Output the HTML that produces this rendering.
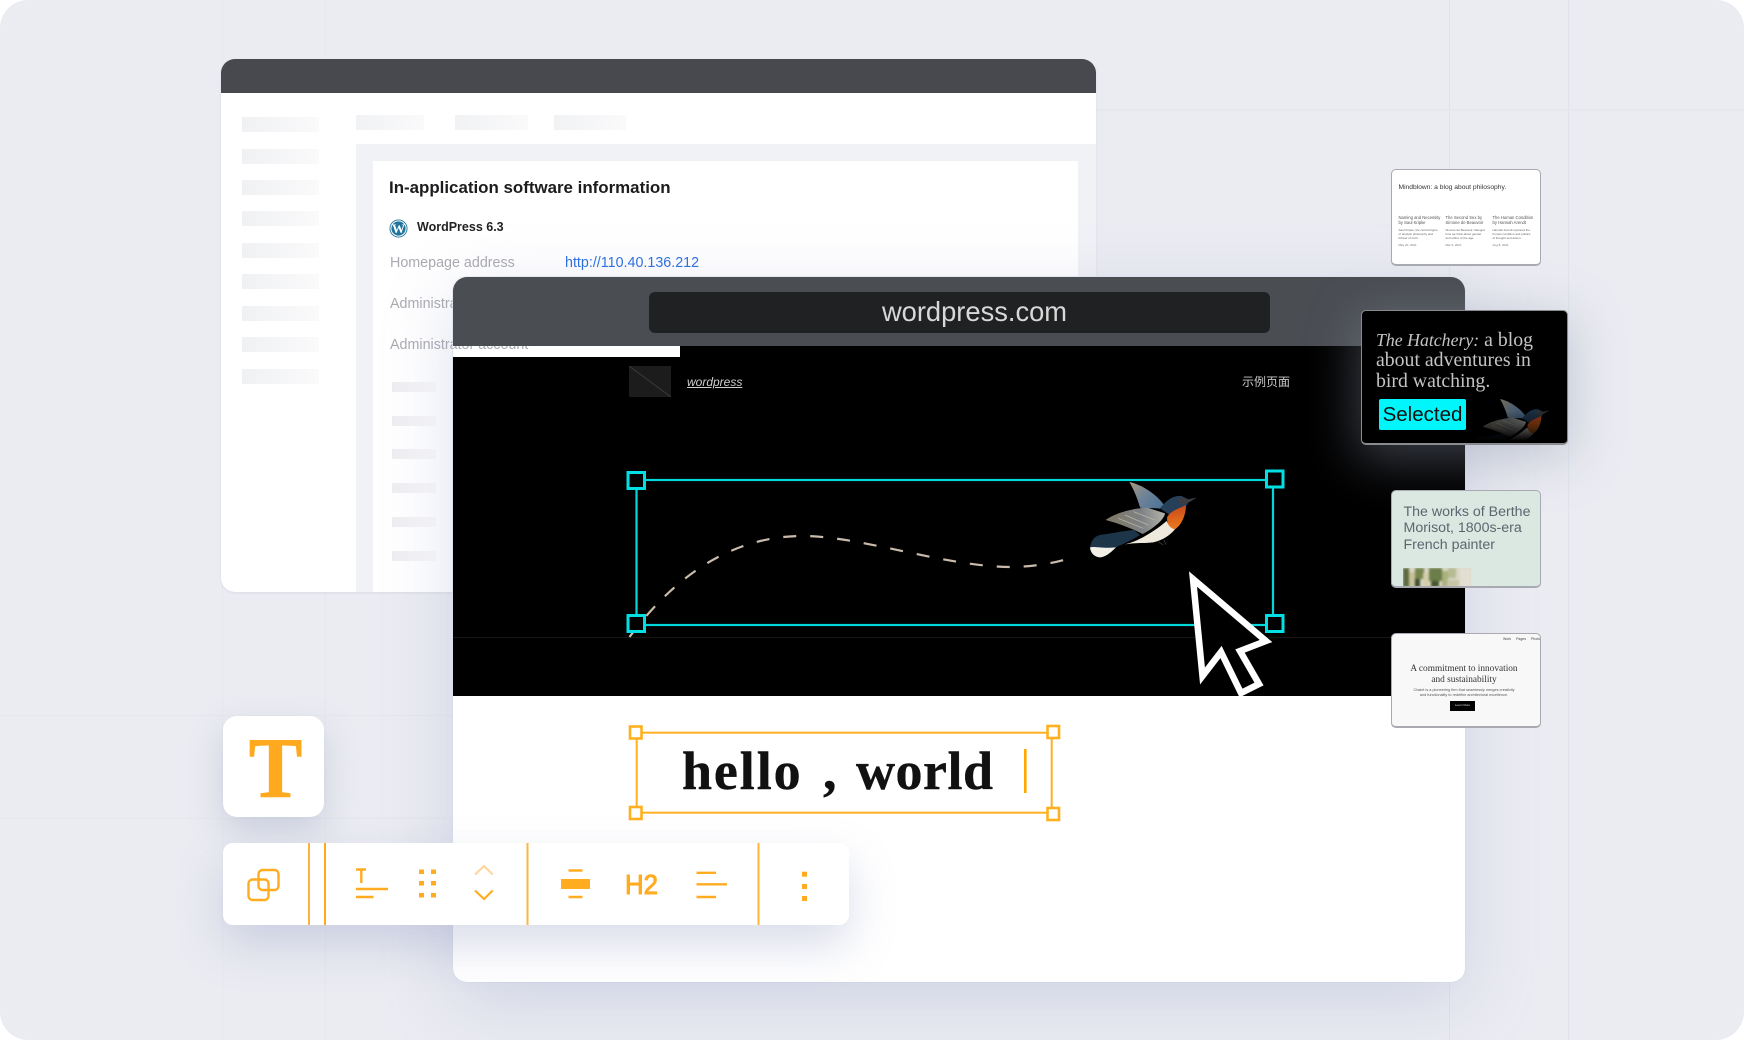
<!DOCTYPE html>
<html lang="en"><head><meta charset="utf-8"><title>WordPress</title>
<style>
html,body{margin:0;padding:0;background:#fff}
#p{position:relative;width:1744px;height:1040px;overflow:hidden;background:#ebecf2;border-radius:28px;font-family:"Liberation Sans","Noto Sans CJK SC",sans-serif}
#p div,#p span,#p svg{position:absolute}
.t{white-space:nowrap;line-height:1}
.gv{width:1px;top:0;height:1040px;background:#e6e8ee}
.gb{background:#dfe4ec}
.gh{height:1px;background:#e6e8ee}
.sb{left:21px;width:77px;height:15px;background:linear-gradient(90deg,#f0f1f3,#fafafb)}
.tb{top:56px;height:15px;background:linear-gradient(90deg,#f1f2f4,#fafafb)}
.sm{left:171px;width:44px;height:10px;background:linear-gradient(90deg,#eeeef1,#fafafb)}
.card{box-sizing:border-box;border:1.5px solid #a9aab1;border-bottom-width:2px;border-radius:5px;overflow:hidden}
</style></head><body>
<div id="p">
<div class="gv" style="left:222px"></div><div class="gv" style="left:325px"></div><div class="gv gb" style="left:1449px"></div><div class="gv gb" style="left:1568px"></div>
<div class="gh" style="left:1096px;right:0;top:109px;height:2px"></div>
<div class="gh" style="left:0;width:453px;top:715px"></div><div class="gh" style="left:0;width:453px;top:818px"></div>

<!-- back window -->
<div style="left:221px;top:59px;width:875px;height:533px;background:#fff;border-radius:14px;overflow:hidden;box-shadow:0 1px 2px rgba(150,155,175,.2)">
  <div style="left:0;top:0;width:875px;height:34px;background:#47494e"></div>
  <div class="sb" style="top:58px"></div><div class="sb" style="top:90px"></div><div class="sb" style="top:121px"></div><div class="sb" style="top:152px"></div><div class="sb" style="top:184px"></div><div class="sb" style="top:215px"></div><div class="sb" style="top:247px"></div><div class="sb" style="top:278px"></div><div class="sb" style="top:310px"></div>
  <div class="tb" style="left:135px;width:68px"></div><div class="tb" style="left:234px;width:73px"></div><div class="tb" style="left:333px;width:72px"></div>
  <div style="left:135px;top:85px;width:740px;height:448px;background:#f1f2f6"></div>
  <div style="left:152px;top:102px;width:705px;height:431px;background:#fff"></div>
  <div class="t" style="left:168px;top:121px;font-size:16.900px;font-weight:700;color:#1c1c1e">In-application software information</div>
  <svg style="left:168px;top:160px" width="19" height="19" viewBox="0 0 19 19"><circle cx="9.500" cy="9.500" r="9" fill="#21759b"/><circle cx="9.500" cy="9.500" r="7.600" fill="none" stroke="#fff" stroke-width="1"/><text x="9.500" y="14" text-anchor="middle" font-family="Liberation Serif" font-weight="700" font-size="13" fill="#fff">W</text></svg>
  <div class="t" style="left:196px;top:162px;font-size:12.500px;font-weight:700;color:#222">WordPress 6.3</div>
  <div class="t" style="left:169px;top:197px;font-size:14.300px;color:#aaaab0">Homepage address</div>
  <div class="t" style="left:344px;top:197px;font-size:14.300px;color:#2b6fe3">http://110.40.136.212</div>
  <div class="t" style="left:169px;top:238px;font-size:14.300px;color:#aaaab0">Administrator</div>
  <div class="t" style="left:169px;top:279px;font-size:14.300px;color:#aaaab0">Administrator account</div>
  <div class="sm" style="top:323px"></div><div class="sm" style="top:357px"></div><div class="sm" style="top:390px"></div><div class="sm" style="top:424px"></div><div class="sm" style="top:458px"></div><div class="sm" style="top:492px"></div>
</div>

<!-- front window -->
<div style="left:453px;top:277px;width:1012px;height:705px;background:#fff;border-radius:14px;box-shadow:0 20px 70px rgba(150,158,200,.32),0 0 0 1px rgba(225,228,236,.6)"></div>
<div style="left:453px;top:277px;width:1012px;height:705px;border-radius:14px;overflow:hidden">
  <div style="left:0;top:0;width:1012px;height:69px;background:#4a4d52"></div>
  <div style="left:196px;top:15px;width:621px;height:41px;background:#202122;border-radius:6px"></div>
  <div class="t" style="left:211px;top:20px;width:621px;text-align:center;font-size:27.300px;color:#d8d8d8;line-height:30px">wordpress.com</div>
  <div style="left:0;top:69px;width:1012px;height:350px;background:#000"></div>
  <div style="left:0;top:69px;width:227px;height:11px;background:#fff;overflow:hidden"><div class="t" style="left:-63px;top:-8px;font-size:14.300px;color:#aaaab0">Administrator account</div></div>
  <div style="left:0;top:360px;width:1012px;height:1px;background:#171717"></div>
  <svg style="left:176px;top:89px" width="42" height="31"><rect width="42" height="31" fill="#1c1c1c"/><path d="M0 0L42 31" stroke="#3a3a3a" stroke-width="1"/></svg>
  <div class="t" style="left:234px;top:99px;font-size:12px;font-style:italic;color:#cfcfcf;text-decoration:underline">wordpress</div>
  <div class="t" style="left:789px;top:99px;font-size:12px;color:#c8c8c8">示例页面</div>
</div>

<!-- overlay drawing -->
<svg style="left:0;top:0" width="1744" height="1040" viewBox="0 0 1744 1040" fill="none">
  <defs>
    <filter id="soft" x="-10%" y="-10%" width="120%" height="120%"><feGaussianBlur stdDeviation="1.100"/></filter>
    <linearGradient id="w1" x1="208" y1="66" x2="300" y2="145" gradientUnits="userSpaceOnUse"><stop offset="0" stop-color="#a8977a"/><stop offset=".5" stop-color="#6f8398"/><stop offset="1" stop-color="#4e7497"/></linearGradient>
    <linearGradient id="w2" x1="137" y1="180" x2="315" y2="165" gradientUnits="userSpaceOnUse"><stop offset="0" stop-color="#7f7763"/><stop offset=".6" stop-color="#7d8184"/><stop offset="1" stop-color="#b4b3aa"/></linearGradient>
    <linearGradient id="o" x1="340" y1="140" x2="350" y2="208" gradientUnits="userSpaceOnUse"><stop offset="0" stop-color="#c9491a"/><stop offset="1" stop-color="#ee7c1f"/></linearGradient>
    <g id="bird" filter="url(#soft)">
      <path d="M208 66C240 72 290 100 316 140L300 146C270 142 250 148 240 142C232 115 222 90 208 66Z" fill="url(#w1)"/>
      <path d="M300 145C320 120 340 105 365 108L385 118L410 113L385 128L378 138L330 165Z" fill="#25405a"/>
      <path d="M350 113L385 118L410 113L385 128L365 135Z" fill="#3d3d40"/>
      <path d="M195 253C225 246 270 225 320 183C325 195 335 205 345 208C330 225 310 240 280 247C250 250 225 248 195 253Z" fill="#efe9dd"/>
      <path d="M322 170C335 150 360 145 378 135C378 165 365 195 345 208C330 205 318 190 322 170Z" fill="url(#o)"/>
      <path d="M90 268C92 245 100 228 125 224C160 220 190 212 222 210L240 225C215 240 190 252 168 262L150 268L120 262Z" fill="#1f3548"/>
      <path d="M90 262C105 258 125 266 168 262C150 280 135 292 118 292C105 290 92 282 90 262Z" fill="#f2efe6"/>
      <path d="M137 180C165 160 215 145 262 143L315 160C312 180 280 205 248 222C215 205 175 190 137 180Z" fill="url(#w2)"/>
      <path d="M175 175L250 205M195 165L265 195M220 155L285 180" stroke="#b7b3a3" stroke-width="2.500"/>
      <path d="M295 245L310 255M312 240L318 254" stroke="#333" stroke-width="3"/>
    </g>
  </defs>

  <!-- cyan frame -->
  <path d="M629.500 637C668 585 725 535 805 536C865 537 950 568 1015 567C1040 566 1060 562 1076 556" stroke="#c9bbab" stroke-width="2.200" stroke-dasharray="13 14"/>
  <rect x="636.500" y="480" width="636.500" height="145" stroke="#00d8dc" stroke-width="2.200"/>
  <g fill="#000" stroke="#00e0e4" stroke-width="3">
    <rect x="628" y="472.500" width="16.500" height="16"/><rect x="1266.500" y="471" width="16.500" height="16"/>
    <rect x="628" y="615.500" width="16.500" height="16"/><rect x="1266.500" y="615.500" width="16.500" height="16"/>
  </g>
  <use href="#bird" transform="translate(1060 460) scale(.3333)"/>
  <polygon points="1193,579 1266,641 1240,651 1259,684 1241,693 1221,652 1202.500,676" fill="#000" stroke="#fff" stroke-width="6.500" stroke-linejoin="miter"/>
  <rect x="453" y="696" width="1012" height="10" fill="#fff"/>

  <!-- orange frame -->
  <rect x="636.700" y="732.700" width="415" height="80" stroke="#ffb020" stroke-width="2"/>
  <g fill="#fff" stroke="#ffb020" stroke-width="2.600">
    <rect x="630" y="726.500" width="11.500" height="12"/><rect x="1047.500" y="726" width="11.500" height="12"/>
    <rect x="630" y="807" width="11.500" height="12"/><rect x="1047.500" y="808" width="11.500" height="12"/>
  </g>
  <rect x="1024" y="749" width="2.600" height="44" fill="#ffa800"/>
  <g font-family="Liberation Serif" font-weight="700" font-size="54" fill="#111" stroke="#111" stroke-width=".4">
    <text x="682" y="789" letter-spacing="1.900">hello</text>
    <text x="823" y="789">,</text>
    <text x="856" y="789" letter-spacing=".5">world</text>
  </g>
</svg>

<!-- T tile -->
<div style="left:223px;top:716px;width:101px;height:101px;background:#fff;border-radius:14px;box-shadow:0 14px 34px rgba(130,140,175,.3)"></div>
<div class="t" style="left:225px;top:723px;width:101px;text-align:center;font:700 86px/90px 'Liberation Serif',serif;color:#ffa91f;-webkit-text-stroke:1px #ffa91f;transform:scaleX(.93)">T</div>

<!-- toolbar -->
<div style="left:223px;top:843px;width:626px;height:82px;background:#fff;border-radius:10px;box-shadow:0 20px 45px rgba(130,140,185,.3)"></div>
<svg style="left:0;top:0" width="1744" height="1040" viewBox="0 0 1744 1040" fill="none" stroke="#ffac20">
  <g stroke-width="2" stroke="#ffb53c">
    <path d="M309 843V925"/><path d="M325 843V925" stroke="#ffa91f"/><path d="M527.500 843V925"/><path d="M758.500 843V925"/>
  </g>
  <g stroke-width="2.400">
    <rect x="258.500" y="870" width="20" height="20" rx="4"/><rect x="248.500" y="879.500" width="20" height="20.500" rx="4"/>
    <path d="M356 869.500H366M361.300 869.500V883M356 889H388M356 897H373.500"/>
    <path d="M568.500 870.500H582.500M568.500 897H582.500M696.500 872.800H716M696.500 884.300H727M696.500 897H716"/>
  </g>
  <path d="M475 874.500L484 866L492.700 874.500" stroke-width="2" stroke="#ffd49a"/>
  <path d="M475 890.500L484 899L492.700 890.500" stroke-width="2.200"/>
  <g fill="#ffac20" stroke="none">
    <rect x="419" y="869.500" width="5" height="4.500"/><rect x="431" y="869.500" width="5" height="4.500"/>
    <rect x="419" y="881" width="5" height="4.500"/><rect x="431" y="881" width="5" height="4.500"/>
    <rect x="419" y="893" width="5" height="4.500"/><rect x="431" y="893" width="5" height="4.500"/>
    <rect x="561" y="879" width="29" height="10"/>
    <rect x="802" y="871.700" width="5" height="5"/><rect x="802" y="884" width="5" height="5"/><rect x="802" y="896" width="5" height="5"/>
    <text x="625" y="894" font-family="Liberation Sans" font-size="27.500" textLength="33" lengthAdjust="spacingAndGlyphs" stroke="#ffac20" stroke-width="1">H2</text>
  </g>
</svg>

<!-- cards -->
<div class="card" style="left:1391px;top:169px;width:150px;height:97px;background:#fff">
  <div class="t" style="left:6.500px;top:14.500px;font-size:6.700px;color:#333">Mindblown: a blog about philosophy.</div>
  <div class="t" style="left:6.500px;top:45px;font-size:4.200px;line-height:5.300px;color:#555">Naming and Necessity<br>by Saul Kripke</div>
  <div class="t" style="left:53.500px;top:45px;font-size:4.200px;line-height:5.300px;color:#555">The Second Sex by<br>Simone de Beauvoir</div>
  <div class="t" style="left:100.500px;top:45px;font-size:4.200px;line-height:5.300px;color:#555">The Human Condition<br>by Hannah Arendt</div>
  <div class="t" style="left:6.500px;top:58px;font-size:3px;line-height:4px;color:#666">Saul Kripke, the central figure<br>of analytic philosophy and<br>thinker of truth.</div>
  <div class="t" style="left:53.500px;top:58px;font-size:3px;line-height:4px;color:#666">Simone de Beauvoir changed<br>how we think about gender<br>and ethics of the age.</div>
  <div class="t" style="left:100.500px;top:58px;font-size:3px;line-height:4px;color:#666">Hannah Arendt explored the<br>human condition and politics<br>of thought and action.</div>
  <div class="t" style="left:6.500px;top:74px;font-size:3px;color:#777">May 20, 2021</div><div class="t" style="left:53.500px;top:74px;font-size:3px;color:#777">Mar 6, 2021</div><div class="t" style="left:100.500px;top:74px;font-size:3px;color:#777">Aug 8, 2021</div>
</div>

<div class="card" style="left:1361px;top:310px;width:207px;height:135px;background:#000;border-color:#8a8b90;box-shadow:0 10px 50px 4px rgba(140,150,172,.42)">
  <div class="t" style="left:14px;top:18.500px;font:19.800px/20.500px 'Liberation Serif',serif;color:#c4c4c4"><i style="font-size:17.800px">The Hatchery:</i> a blog<br>about adventures in<br>bird watching.</div>
  <svg style="left:-2px;top:-2px;opacity:.72" width="207" height="135" viewBox="1361 310 207 135" fill="none"><use href="#bird" transform="translate(1450.400 384) scale(.2433)"/></svg>
  <div style="left:60px;top:100px;width:147px;height:35px;background:linear-gradient(180deg,rgba(0,0,0,0) 0,rgba(0,0,0,.35) 35%,#000 85%)"></div>
  <div class="t" style="left:17px;top:88px;width:87px;height:31px;background:#00f6fb;border-radius:2px;color:#111;font-size:20.500px;line-height:31px;text-align:center">Selected</div>
</div>

<div class="card" style="left:1391px;top:490px;width:150px;height:98px;background:#dbe8e2">
  <div class="t" style="left:11.500px;top:12.500px;font-size:14.200px;line-height:16.800px;color:#5a666f">The works of Berthe<br>Morisot, 1800s-era<br>French painter</div>
  <svg style="left:10.500px;top:77px" width="68" height="19"><rect width="68" height="19" fill="#d9d8c6"/><g style="filter:blur(1px)"><rect x="0" y="0" width="6" height="19" fill="#5e6a42"/><rect x="6" y="4" width="7" height="15" fill="#c8c39a"/><rect x="12" y="0" width="9" height="11" fill="#77854f"/><rect x="12" y="11" width="5" height="8" fill="#3f4a2c"/><rect x="20" y="5" width="6" height="14" fill="#d3ceaa"/><rect x="26" y="0" width="13" height="13" fill="#6b7d48"/><rect x="28" y="13" width="8" height="6" fill="#48552f"/><rect x="39" y="3" width="6" height="16" fill="#a9b07e"/><rect x="45" y="0" width="8" height="10" fill="#b6bb93"/><rect x="44" y="12" width="12" height="7" fill="#c6c6a6"/><rect x="57" y="0" width="11" height="19" fill="#e2dfd2"/></g></svg>
</div>

<div class="card" style="left:1391px;top:633px;width:150px;height:95px;background:#f8f8f8">
  <div class="t" style="left:111px;top:3.500px;font-size:3.500px;color:#444;word-spacing:4px">Work Pages Photo</div>
  <div class="t" style="left:0;top:29.500px;width:144px;text-align:center;font:9.300px/11px 'Liberation Serif',serif;color:#333">A commitment to innovation<br>and sustainability</div>
  <div class="t" style="left:0;top:54px;width:144px;text-align:center;font-size:3.800px;line-height:5px;color:#555">Chalet is a pioneering firm that seamlessly merges creativity<br>and functionality to redefine architectural excellence.</div>
  <div class="t" style="left:58px;top:67px;width:25px;height:9.500px;background:#000;color:#ddd;font-size:3px;line-height:9.500px;text-align:center">Learn More</div>
</div>
</div>
</body></html>
